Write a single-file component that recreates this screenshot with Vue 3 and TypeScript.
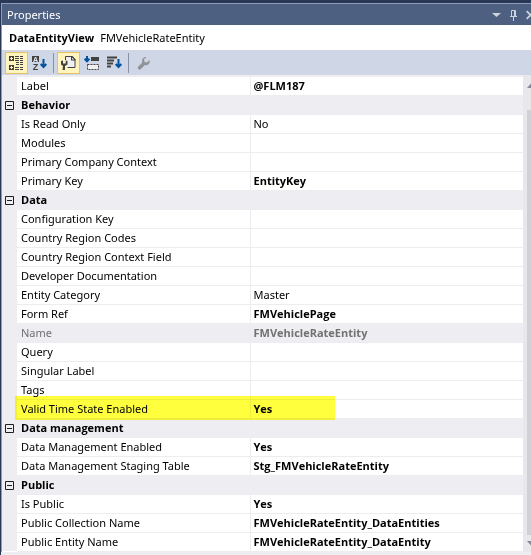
<script setup lang="ts">
import { ref } from 'vue'

interface Property {
  name: string
  value: string
  bold?: boolean
  readOnly?: boolean
  marked?: boolean
}

interface Category {
  title: string
  items: Property[]
}

const categories: Category[] = [
  { title: '', items: [{ name: 'Label', value: '@FLM187', bold: true }] },
  {
    title: 'Behavior',
    items: [
      { name: 'Is Read Only', value: 'No' },
      { name: 'Modules', value: '' },
      { name: 'Primary Company Context', value: '' },
      { name: 'Primary Key', value: 'EntityKey', bold: true },
    ],
  },
  {
    title: 'Data',
    items: [
      { name: 'Configuration Key', value: '' },
      { name: 'Country Region Codes', value: '' },
      { name: 'Country Region Context Field', value: '' },
      { name: 'Developer Documentation', value: '' },
      { name: 'Entity Category', value: 'Master' },
      { name: 'Form Ref', value: 'FMVehiclePage', bold: true },
      { name: 'Name', value: 'FMVehicleRateEntity', bold: true, readOnly: true },
      { name: 'Query', value: '' },
      { name: 'Singular Label', value: '' },
      { name: 'Tags', value: '' },
      { name: 'Valid Time State Enabled', value: 'Yes', bold: true, marked: true },
    ],
  },
  {
    title: 'Data management',
    items: [
      { name: 'Data Management Enabled', value: 'Yes', bold: true },
      { name: 'Data Management Staging Table', value: 'Stg_FMVehicleRateEntity', bold: true },
    ],
  },
  {
    title: 'Public',
    items: [
      { name: 'Is Public', value: 'Yes', bold: true },
      { name: 'Public Collection Name', value: 'FMVehicleRateEntity_DataEntities', bold: true },
      { name: 'Public Entity Name', value: 'FMVehicleRateEntity_DataEntity', bold: true },
    ],
  },
]

const collapsed = ref<Record<string, boolean>>({})

function toggle(title: string) {
  collapsed.value[title] = !collapsed.value[title]
}
</script>

<template>
  <section class="panel">
    <header class="titlebar">
      <h1 class="title">Properties</h1>
      <div class="window-buttons">
        <button type="button" class="window-button" aria-label="Window position">
          <svg width="9" height="12" viewBox="0 0 9 12"><path d="M0 4h9L4.5 8z" fill="#ced4dd" /></svg>
        </button>
        <button type="button" class="window-button" aria-label="Auto hide">
          <svg width="7" height="12" viewBox="0 0 7 12">
            <path d="M1.5 7V1.5h4V7M0 7.500h7M3.500 8v4M4.500 1v6" fill="none" stroke="#ced4dd" />
          </svg>
        </button>
        <button type="button" class="window-button" aria-label="Close">
          <svg width="9" height="12" viewBox="0 0 9 12">
            <path d="M.7 2.200L8.300 9.800M8.300 2.200L.7 9.800" fill="none" stroke="#ced4dd" stroke-width="1.800" />
          </svg>
        </button>
      </div>
    </header>

    <div class="object"><strong>DataEntityView</strong><span>FMVehicleRateEntity</span></div>

    <div class="toolbar" role="toolbar" aria-label="Property view">
      <button type="button" class="tool on" aria-label="Categorized">
        <svg width="17" height="16" viewBox="0 0 17 16">
          <path d="M1 1h5v5H1zM1 10h5v5H1z" fill="#424242" />
          <path d="M2 3.500h3M3.500 2v3M2 12.500h3M3.500 11v3" stroke="#fff4be" />
          <path d="M7 1.500h4M12 1.500h3M7 3.500h4M12 3.500h3M7 5.500h4M12 5.500h3M8 7.500h3M12 7.500h3M8 9.500h3M12 9.500h3M7 12.500h4M12 12.500h3M7 14.500h4M12 14.500h3" stroke="#424242" />
        </svg>
      </button>
      <button type="button" class="tool" aria-label="Alphabetical">
        <svg width="17" height="16" viewBox="0 0 17 16">
          <path d="M1 1h7v6H1z" fill="#424242" />
          <text x="4.500" y="6.500" class="letter" fill="#e8ecf4">A</text>
          <text x="4.500" y="15" class="letter big" fill="#424242">Z</text>
          <path d="M12.500 4v8M9.700 9l2.800 3 2.800-3" fill="none" stroke="#00539c" stroke-width="2" />
        </svg>
      </button>
      <span class="separator"></span>
      <button type="button" class="tool on" aria-label="Properties">
        <svg width="17" height="16" viewBox="0 0 17 16">
          <path d="M5.500 5V1.500h6.500l3 3v8H7.500" fill="#f0eff1" stroke="#424242" />
          <path d="M11 1v4.500h4.500V4.500L12.500 1z" fill="#424242" />
          <path d="M12 2.500V4.500h2z" fill="#f0eff1" />
          <path d="M1 6v3.500L3 11l-.5 4h2.500V11l2.500-1.500V6L5.700 5.500v3H3V5.500z" fill="#424242" />
        </svg>
      </button>
      <button type="button" class="tool" aria-label="Show changed">
        <svg width="17" height="16" viewBox="0 0 17 16">
          <path d="M4 1v5M1.600 3.700L4 6.200l2.400-2.500" fill="none" stroke="#00539c" stroke-width="2" />
          <path d="M8 2h8v4H8z" fill="#424242" />
          <path d="M4.500 9.500h11v5h-11z" fill="#f0eff1" stroke="#424242" stroke-dasharray="2 1" />
        </svg>
      </button>
      <button type="button" class="tool" aria-label="Sort by value">
        <svg width="17" height="16" viewBox="0 0 17 16">
          <path d="M1 2.500h10M1 5.500h7M1 8.500h6M1 11.500h4" stroke="#424242" stroke-width="2" />
          <path d="M12.500 4v8M9.700 9l2.800 3 2.800-3" fill="none" stroke="#00539c" stroke-width="2" />
        </svg>
      </button>
      <span class="separator"></span>
      <button type="button" class="tool" aria-label="Property pages" disabled>
        <svg width="17" height="16" viewBox="0 0 17 16">
          <path d="M11.500 2L9 4.500 9.500 7l2.500.5L14.500 5c.8 2-.2 4.300-2.200 5-.8.300-1.700.2-2.400 0L5.600 14.300c-1.700 1.200-3.700-.8-2.500-2.500L7.300 7.500C6.300 4.500 8.500 1.500 11.500 2z" fill="#919399" />
        </svg>
      </button>
    </div>

    <div class="body">
      <table class="grid">
        <colgroup><col class="col-gutter" /><col class="col-name" /><col /></colgroup>
        <tbody v-for="category in categories" :key="category.title">
          <tr v-if="category.title" class="category">
            <td class="gutter">
              <button
                type="button"
                class="toggle"
                :aria-label="category.title"
                :aria-expanded="!collapsed[category.title]"
                @click="toggle(category.title)"
              >
                <svg width="9" height="9" viewBox="0 0 9 9">
                  <path d="M.5.5h8v8h-8zM2 4.500h5" fill="none" stroke="#1e1e1e" />
                  <path v-if="collapsed[category.title]" d="M4.500 2v5" stroke="#1e1e1e" />
                </svg>
              </button>
            </td>
            <th colspan="2" scope="rowgroup">{{ category.title }}</th>
          </tr>
          <template v-if="!collapsed[category.title]">
            <tr v-for="item in category.items" :key="item.name" :class="{ locked: item.readOnly }">
              <td class="gutter"><span v-if="item.marked" class="marker"></span></td>
              <th scope="row" class="name">{{ item.name }}</th>
              <td class="value" :class="{ bold: item.bold }">{{ item.value }}</td>
            </tr>
          </template>
        </tbody>
      </table>
      <div class="scrollbar" aria-hidden="true">
        <svg class="arrow" width="9" height="5" viewBox="0 0 9 5"><path d="M0 5h9L4.500 0z" fill="#868999" /></svg>
        <div class="thumb"></div>
        <svg class="arrow" width="9" height="5" viewBox="0 0 9 5"><path d="M0 0h9L4.500 5z" fill="#868999" /></svg>
      </div>
    </div>
  </section>
</template>

<style>
body {
  overflow: hidden;
  background: #eeeef2;
}
</style>

<style scoped>
.panel {
  box-sizing: border-box;
  min-height: 100vh;
  border-top: 3px solid #293955;
  border-left: 1px solid #293955;
  background: #eeeef2;
  color: #000;
  font: 11px/18px 'Noto Sans', 'Open Sans', sans-serif;
  overflow: hidden;
}

button {
  padding: 0;
  border: 0;
  background: none;
  font: inherit;
}

svg {
  display: block;
}

.titlebar {
  display: flex;
  justify-content: space-between;
  align-items: center;
  height: 21px;
  padding-left: 5px;
  border-top: 1px solid #8e9bbc;
  border-left: 1px solid #8e9bbc;
  background: #4d6082;
  color: #fff;
}

.title {
  margin: 0;
  font-size: 11px;
  font-weight: 400;
}

.window-buttons {
  display: flex;
  gap: 9px;
  margin-right: -4px;
}

.window-button {
  flex: none;
}

.object {
  display: flex;
  align-items: center;
  gap: 6px;
  height: 25px;
  padding-left: 7px;
  border-left: 1px solid #8e9bbc;
  background: #fff;
}

.toolbar {
  display: flex;
  align-items: center;
  height: 25px;
  padding-left: 3px;
  border-left: 1px solid #8e9bbc;
  background: #cfd6e5;
}

.tool {
  display: grid;
  place-items: center;
  width: 23px;
  height: 22px;
  border: 1px solid transparent;
}

.tool.on {
  border-color: #e5c365;
  background: #fff4be;
}

.letter {
  font: bold 7px 'Liberation Sans', sans-serif;
  text-anchor: middle;
}

.letter.big {
  font-size: 9px;
}

.separator {
  width: 1px;
  height: 20px;
  margin: 0 3px 0 2px;
  background: #8591a9;
}

.body {
  display: flex;
  border-left: 1px solid #8e9bbc;
}

.grid {
  flex: 1;
  min-width: 0;
  margin-top: 2px;
  table-layout: fixed;
  border-collapse: collapse;
  border-bottom: 1px solid #fff;
}

.col-gutter {
  width: 15px;
}

.col-name {
  width: 233px;
}

td,
th {
  height: 18px;
  padding: 0 0 0 4px;
  border-bottom: 1px solid #ededf0;
  background: #fff;
  font-weight: 400;
  text-align: left;
  white-space: nowrap;
}

.name {
  border-right: 1px solid #ededf0;
}

.value {
  padding-left: 3px;
}

.gutter,
.category th,
.locked th,
.locked td {
  background: #eeeef2;
}

.gutter {
  position: relative;
  padding: 0 0 0 3px;
  border-bottom: 0;
}

strong,
.category th,
.bold {
  font-family: 'Open Sans', 'Noto Sans', sans-serif;
  font-weight: 700;
}

.locked {
  color: #717171;
}

.toggle {
  display: block;
}

.marker {
  position: absolute;
  z-index: 1;
  top: -4px;
  left: 13px;
  width: 320px;
  height: 24px;
  background: #ffff3e;
  mix-blend-mode: multiply;
  pointer-events: none;
}

.scrollbar {
  box-sizing: border-box;
  display: flex;
  flex-direction: column;
  align-items: center;
  width: 17px;
  margin-right: -9px;
  padding: 8px 0 6px;
  background: #e8e8ec;
}

.thumb {
  flex: 1;
  width: 9px;
  margin: 22px 0 6px;
  background: #d0d1d7;
}

.arrow {
  flex: none;
}
</style>
